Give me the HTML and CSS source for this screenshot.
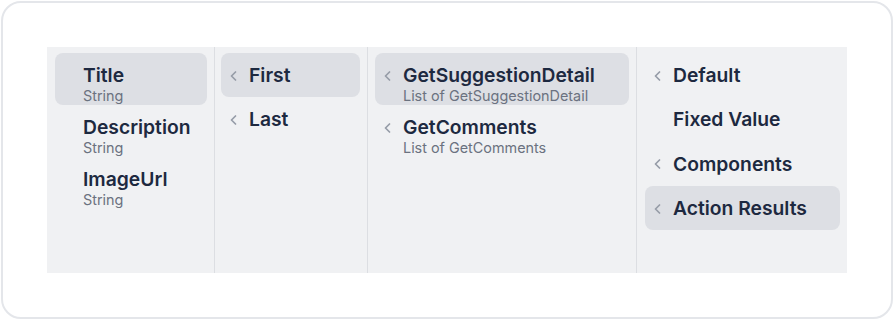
FILE: index.html
```html
<!DOCTYPE html>
<html lang="en">
<head>
  <meta charset="UTF-8" />
  <meta name="viewport" content="width=device-width, initial-scale=1.0"/>
  <title>Field Picker</title>
  <link rel="stylesheet" href="styles.css">
</head>
<body>

  <div class="card">
    <div class="picker">

      <div class="column col-fields">
        <div class="item active">
          <span class="chev"></span>
          <div class="label">
            <div class="title">Title</div>
            <div class="sub">String</div>
          </div>
        </div>
        <div class="item">
          <span class="chev"></span>
          <div class="label">
            <div class="title">Description</div>
            <div class="sub">String</div>
          </div>
        </div>
        <div class="item">
          <span class="chev"></span>
          <div class="label">
            <div class="title">ImageUrl</div>
            <div class="sub">String</div>
          </div>
        </div>
      </div>

      <div class="column col-position">
        <div class="item single active">
          <span class="chev"><svg viewBox="0 0 7 10"><path d="M5.5 1 1.5 5l4 4"/></svg></span>
          <div class="title">First</div>
        </div>
        <div class="item single">
          <span class="chev"><svg viewBox="0 0 7 10"><path d="M5.5 1 1.5 5l4 4"/></svg></span>
          <div class="title">Last</div>
        </div>
      </div>

      <div class="column col-actions">
        <div class="item active">
          <span class="chev"><svg viewBox="0 0 7 10"><path d="M5.5 1 1.5 5l4 4"/></svg></span>
          <div class="label">
            <div class="title">GetSuggestionDetail</div>
            <div class="sub">List of GetSuggestionDetail</div>
          </div>
        </div>
        <div class="item">
          <span class="chev"><svg viewBox="0 0 7 10"><path d="M5.5 1 1.5 5l4 4"/></svg></span>
          <div class="label">
            <div class="title">GetComments</div>
            <div class="sub">List of GetComments</div>
          </div>
        </div>
      </div>

      <div class="column col-source">
        <div class="item single">
          <span class="chev"><svg viewBox="0 0 7 10"><path d="M5.5 1 1.5 5l4 4"/></svg></span>
          <div class="title">Default</div>
        </div>
        <div class="item single">
          <span class="chev"></span>
          <div class="title">Fixed Value</div>
        </div>
        <div class="item single">
          <span class="chev"><svg viewBox="0 0 7 10"><path d="M5.5 1 1.5 5l4 4"/></svg></span>
          <div class="title">Components</div>
        </div>
        <div class="item single active">
          <span class="chev"><svg viewBox="0 0 7 10"><path d="M5.5 1 1.5 5l4 4"/></svg></span>
          <div class="title">Action Results</div>
        </div>
      </div>

    </div>
  </div>

</body>
</html>
```

FILE: styles.css
```css
body {
  margin: 0;
  background: #ffffff;
  font-family: Inter, "Noto Sans", sans-serif;
  color: #1e293b;
}

.card {
  margin: 1px;
  height: 318px;
  border: 2px solid #e4e6ea;
  border-radius: 20px;
  padding: 44px;
  box-sizing: border-box;
}

.picker {
  display: grid;
  grid-template-columns: 168px 153px 269px 210px;
  height: 226px;
  background: #f0f1f3;
}

.column {
  padding: 6px 7px 6px 8px;
  border-right: 1px solid #dcdee2;
}

.col-position {
  padding-left: 6px;
}

.col-actions {
  padding-left: 7px;
}

.column:last-child {
  border-right: none;
}

.item {
  display: flex;
  align-items: flex-start;
  padding: 11px 0 0;
  height: 52px;
  box-sizing: border-box;
  border-radius: 8px;
}

.item.single {
  height: 44.33px;
}

.item.active {
  background: #dddfe4;
}

.chev {
  flex: 0 0 19px;
  height: 23.4px;
  margin-left: 9px;
  display: flex;
  align-items: center;
}

.chev svg {
  width: 7px;
  height: 10px;
  fill: none;
  stroke: #969ca7;
  stroke-width: 1.7;
  stroke-linecap: round;
  stroke-linejoin: round;
}

.title {
  font-size: 19.3px;
  line-height: 23.4px;
  font-weight: 600;
  color: #1d2940;
  white-space: nowrap;
}

.sub {
  font-size: 14.4px;
  line-height: 17.5px;
  color: #6b7280;
  white-space: nowrap;
}
```
